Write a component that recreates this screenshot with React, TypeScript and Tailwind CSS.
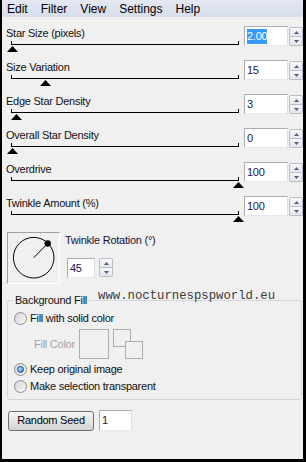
import React from 'react';

// Star filter dialog (PSP plugin style), Win7 look

interface SliderRow {
  label: string;
  value: string;
  num: number;
  min: number;
  max: number;
  selected?: boolean;
}

const rows: SliderRow[] = [
  { label: 'Star Size (pixels)', value: '2.00', num: 2, min: 2, max: 100, selected: true },
  { label: 'Size Variation', value: '15', num: 15, min: 0, max: 100 },
  { label: 'Edge Star Density', value: '3', num: 3, min: 1, max: 100 },
  { label: 'Overall Star Density', value: '0', num: 0, min: 0, max: 100 },
  { label: 'Overdrive', value: '100', num: 100, min: 0, max: 100 },
  { label: 'Twinkle Amount (%)', value: '100', num: 100, min: 0, max: 100 },
];

const TRACK = 226;

const Spinner: React.FC = () => (
  <div className="flex flex-col w-[14px] h-[19px] shrink-0">
    <div className="h-[10px] border border-[#b9bec8] rounded-t-[2px] bg-linear-to-b from-[#fbfbfc] to-[#e4e7ec] flex items-center justify-center">
      <svg width="5" height="3" viewBox="0 0 5 3">
        <polygon points="0,3 2.5,0 5,3" fill="#4d6185" />
      </svg>
    </div>
    <div className="h-[9px] border border-t-0 border-[#b9bec8] rounded-b-[2px] bg-linear-to-b from-[#f6f7f9] to-[#e2e5ea] flex items-center justify-center">
      <svg width="5" height="3" viewBox="0 0 5 3">
        <polygon points="0,0 5,0 2.5,3" fill="#4d6185" />
      </svg>
    </div>
  </div>
);

const TextBox: React.FC<{ value: string; selected?: boolean; className?: string }> = ({ value, selected, className }) => (
  <div
    className={`bg-white border border-[#abadb3] border-r-[#dbdfe6] border-b-[#e3e9ef] flex items-center pl-[2px] text-[11px] leading-[15px] shrink-0 ${className ?? ''}`}
  >
    {selected ? (
      <span className="bg-[#3399ff] text-white">{value}</span>
    ) : (
      <span className="text-[#1c1450]">{value}</span>
    )}
  </div>
);

const Radio: React.FC<{ checked?: boolean; label: string }> = ({ checked, label }) => (
  <div className="flex items-center h-[16px] gap-[3px]">
    <div className="w-[13px] h-[13px] rounded-full border border-[#8e8f8f] bg-linear-to-br from-[#d4d4d4] to-[#fbfbfb] flex items-center justify-center shrink-0">
      {checked && (
        <div className="w-[7px] h-[7px] rounded-full border border-[#1b4f92] bg-[radial-gradient(circle_at_35%_35%,#a8dcff,#2a78cc)]" />
      )}
    </div>
    <span>{label}</span>
  </div>
);

export default function App() {
  return (
    <div className="relative w-[306px] h-[462px] bg-[#f0f0f0] border-l-2 border-r-[3px] border-b-[3px] border-black overflow-hidden flex flex-col font-['Liberation_Sans',Arial,sans-serif] text-[#111] text-[11px] tracking-[-0.25px]">
      {/* menu bar */}
      <div className="h-[17px] flex items-center pl-[5px] gap-[13px] text-[12px] tracking-normal bg-linear-to-b from-[#e4e8f3] to-[#d8ddeb] text-black">
        <span>Edit</span>
        <span>Filter</span>
        <span>View</span>
        <span>Settings</span>
        <span>Help</span>
      </div>

      <div className="pl-[4px] pt-[9px] flex flex-col">
        {rows.map(r => {
          const frac = (r.num - r.min) / (r.max - r.min);
          return (
            <div key={r.label} className="flex h-[34px] items-start">
              <div className="w-[236px] shrink-0 flex flex-col">
                <div className="h-[14px] leading-[14px]">{r.label}</div>
                <div className="relative ml-[5px] mt-px w-[228px] h-[4px] border-x border-b border-black">
                  <svg
                    width="11"
                    height="6"
                    viewBox="0 0 11 6"
                    className="absolute top-full mt-[2px]"
                    style={{ left: frac * TRACK - 5.5 }}
                  >
                    <polygon points="5.5,0 11,6 0,6" fill="#000" />
                  </svg>
                </div>
              </div>
              <TextBox value={r.value} selected={r.selected} className="ml-[2px] w-[44px] h-[20px]" />
              <div className="ml-px mt-px">
                <Spinner />
              </div>
            </div>
          );
        })}

        {/* twinkle rotation */}
        <div className="flex mt-[2px]">
          <div className="ml-px w-[53px] h-[52px] border border-t-[#a0a0a0] border-l-[#a0a0a0] border-r-[#fdfdfd] border-b-[#fdfdfd] shrink-0">
            <svg width="51" height="50" viewBox="0 0 51 50">
              <circle cx="25.7" cy="24.7" r="20.3" fill="none" stroke="#000" strokeWidth="1" />
              <line x1="25.7" y1="24.7" x2="39.7" y2="10.5" stroke="#000" strokeWidth="1" />
              <circle cx="39.7" cy="10.5" r="3.2" fill="#000" />
            </svg>
          </div>
          <div className="ml-[5px] flex flex-col">
            <div className="mt-px h-[14px] leading-[14px] text-[#14103a]">Twinkle Rotation (°)</div>
            <div className="flex mt-[11px] items-start">
              <TextBox value="45" className="ml-[2px] w-[28px] h-[20px]" />
              <div className="ml-[4px]">
                <Spinner />
              </div>
            </div>
          </div>
        </div>

        {/* background fill group */}
        <fieldset className="mt-[9px] ml-px w-[295px] border border-[#d3d6da] rounded-[3px]">
          <legend className="ml-[5px] px-[2px] h-[14px] leading-[14px]">Background Fill</legend>
          <div className="pl-[6px] pt-[3px] pb-[5px] flex flex-col">
            <Radio label="Fill with solid color" />
            <div className="flex items-center mt-[3px] h-[30px]">
              <span className="ml-[20px] w-[45px] text-[#a3a3a3]">Fill Color</span>
              <div className="w-[30px] h-[30px] border border-[#adadad]" />
              <svg width="30" height="30" viewBox="0 0 30 30" className="ml-[4px]">
                <rect x="0.5" y="0.5" width="17" height="17" fill="#f0f0f0" stroke="#adadad" />
                <rect x="12.5" y="12.5" width="17" height="17" fill="#f0f0f0" stroke="#adadad" />
              </svg>
            </div>
            <div className="mt-[2px]">
              <Radio checked label="Keep original image" />
            </div>
            <div className="mt-px">
              <Radio label="Make selection transparent" />
            </div>
          </div>
        </fieldset>

        {/* random seed */}
        <div className="flex items-center mt-[10px]">
          <button className="ml-[2px] w-[86px] h-[20px] rounded-[3px] border border-[#707070] bg-linear-to-b from-[#f4f4f4] via-[#e6e6e6] to-[#d3d3d3] text-black text-[11px] leading-none">
            Random Seed
          </button>
          <TextBox value="1" className="ml-[5px] w-[33px] h-[21px]" />
        </div>
      </div>

      {/* watermark overlay */}
      <div className="absolute left-[96px] top-[289px] font-['Liberation_Mono',monospace] text-[12.3px] leading-[14px] tracking-normal text-[#3a3a3a]">
        www.nocturnespspworld.eu
      </div>
    </div>
  );
}
